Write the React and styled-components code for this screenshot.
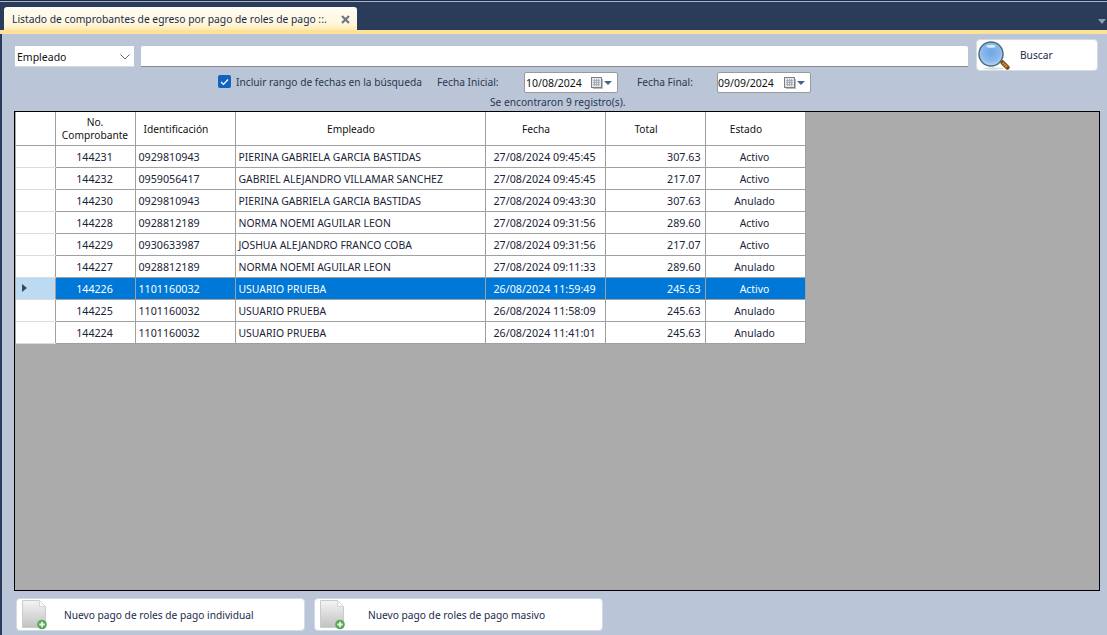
import React from "react";
import styled, { createGlobalStyle } from "styled-components";

const rows = [
  ["144231", "0929810943", "PIERINA GABRIELA GARCIA BASTIDAS", "27/08/2024 09:45:45", "307.63", "Activo"],
  ["144232", "0959056417", "GABRIEL ALEJANDRO VILLAMAR SANCHEZ", "27/08/2024 09:45:45", "217.07", "Activo"],
  ["144230", "0929810943", "PIERINA GABRIELA GARCIA BASTIDAS", "27/08/2024 09:43:30", "307.63", "Anulado"],
  ["144228", "0928812189", "NORMA NOEMI AGUILAR LEON", "27/08/2024 09:31:56", "289.60", "Activo"],
  ["144229", "0930633987", "JOSHUA ALEJANDRO FRANCO COBA", "27/08/2024 09:31:56", "217.07", "Activo"],
  ["144227", "0928812189", "NORMA NOEMI AGUILAR LEON", "27/08/2024 09:11:33", "289.60", "Anulado"],
  ["144226", "1101160032", "USUARIO PRUEBA", "26/08/2024 11:59:49", "245.63", "Activo"],
  ["144225", "1101160032", "USUARIO PRUEBA", "26/08/2024 11:58:09", "245.63", "Anulado"],
  ["144224", "1101160032", "USUARIO PRUEBA", "26/08/2024 11:41:01", "245.63", "Anulado"],
];

function SearchIcon() {
  return (
    <svg width="34" height="31" viewBox="0 0 34 31">
      <defs>
        <radialGradient id="lens" cx="50%" cy="42%" r="60%">
          <stop offset="0%" stopColor="#6ea6e8" />
          <stop offset="65%" stopColor="#8ab9ec" />
          <stop offset="100%" stopColor="#c4e0f6" />
        </radialGradient>
      </defs>
      <ellipse cx="15" cy="28.500" rx="10" ry="1.200" fill="#dcdcdc" />
      <path d="M24.500 22.500l5 5" stroke="#7c4a14" strokeWidth="4.500" strokeLinecap="round" />
      <path d="M24.800 22.800l4.500 4.500" stroke="#e5a23c" strokeWidth="2.400" strokeDasharray="1.300 .9" />
      <circle cx="13" cy="14" r="12" fill="url(#lens)" stroke="#4d6d80" strokeWidth="1.500" />
      <ellipse cx="13" cy="6.200" rx="4.500" ry="1.500" fill="#d9ecfb" />
    </svg>
  );
}

function NewDocIcon() {
  return (
    <svg width="26" height="30" viewBox="0 0 26 30">
      <defs>
        <linearGradient id="sheet" x1="0" y1="0" x2="0" y2="1">
          <stop offset="0%" stopColor="#f4f4f4" />
          <stop offset="100%" stopColor="#c2c2c2" />
        </linearGradient>
      </defs>
      <path d="M.5.500h17l6 6v21H.5z" fill="url(#sheet)" stroke="#cbcbcb" />
      <path d="M17.500.500v6h6z" fill="#fbfbfb" stroke="#d6d6d6" />
      <circle cx="20" cy="24.500" r="4.800" fill="#58a85a" />
      <path d="M20 21.800v5.400M17.300 24.500h5.400" stroke="#e8f5e8" strokeWidth="1.800" />
    </svg>
  );
}

function CalendarIcon() {
  return (
    <svg width="12" height="12" viewBox="0 0 12 12">
      <rect x="0.500" y="0.500" width="10" height="10" fill="#e4e6ea" stroke="#7d7f86" />
      <path d="M2 3.500h7M2 5.500h7M2 7.500h7M3.500 2v7M5.500 2v7M7.500 2v7" stroke="#a2a5ae" strokeWidth="0.800" />
      <path d="M11.500 2v9.500H2" fill="none" stroke="#b9b9b9" />
    </svg>
  );
}

export default function App() {
  return (
    <>
      <GlobalStyle />
      <Window>
        <TabStrip>
          <Tab>
            <TabTitle>Listado de comprobantes de egreso por pago de roles de pago ::.</TabTitle>
            <TabClose>
              <svg width="9" height="9" viewBox="0 0 9 9">
                <path d="M1 1l7 7M8 1L1 8" stroke="#70767f" strokeWidth="2.200" />
              </svg>
            </TabClose>
          </Tab>
          <StripArrow />
        </TabStrip>
        <Accent />
        <Content>
          <SearchRow>
            <Select>
              <span>Empleado</span>
              <svg width="10" height="6" viewBox="0 0 10 6">
                <path d="M.5.500L5 5 9.500.500" fill="none" stroke="#666" />
              </svg>
            </Select>
            <SearchInput />
            <ActionButton $width={122} $height={32} $pad={1}>
              <SearchIcon />
              <ButtonLabel $gap={8}>Buscar</ButtonLabel>
            </ActionButton>
          </SearchRow>
          <FilterRow>
            <CheckBox>
              <svg width="9" height="8" viewBox="0 0 9 8">
                <path d="M1 4l2.500 2.500L8 1.500" fill="none" stroke="#fff" strokeWidth="1.200" />
              </svg>
            </CheckBox>
            <FilterLabel $width={201}>Incluir rango de fechas en la búsqueda</FilterLabel>
            <FilterLabel $width={87}>Fecha Inicial:</FilterLabel>
            <DateField $pad={1}>
              <DateText $width={65}>10/08/2024</DateText>
              <CalendarIcon />
              <DropArrow />
            </DateField>
            <FilterLabel $width={80} $pad={19}>Fecha Final:</FilterLabel>
            <DateField $pad={0}>
              <DateText $width={66}>09/09/2024</DateText>
              <CalendarIcon />
              <DropArrow />
            </DateField>
          </FilterRow>
          <ResultCount>Se encontraron 9 registro(s).</ResultCount>
          <GridPanel>
            <Table>
              <colgroup>
                <col width="39" />
                <col width="80" />
                <col width="100" />
                <col width="250" />
                <col width="120" />
                <col width="100" />
                <col width="100" />
              </colgroup>
              <thead>
                <tr>
                  <HeadCell />
                  <HeadCell>No.<br />Comprobante</HeadCell>
                  <HeadCell $sortable>Identificación</HeadCell>
                  <HeadCell $sortable>Empleado</HeadCell>
                  <HeadCell $sortable>Fecha</HeadCell>
                  <HeadCell $sortable>Total</HeadCell>
                  <HeadCell $sortable>Estado</HeadCell>
                </tr>
              </thead>
              <tbody>
                {rows.map((r) => {
                  const selected = r[0] === "144226";
                  return (
                    <Row key={r[0]} $selected={selected}>
                      <RowHeader $selected={selected}>{selected && <RowMarker />}</RowHeader>
                      <Cell $align="center" $numeric>{r[0]}</Cell>
                      <Cell $numeric>{r[1]}</Cell>
                      <Cell>{r[2]}</Cell>
                      <Cell $align="center" $numeric>{r[3]}</Cell>
                      <Cell $align="right" $numeric>{r[4]}</Cell>
                      <Cell $align="center">{r[5]}</Cell>
                    </Row>
                  );
                })}
              </tbody>
            </Table>
          </GridPanel>
          <Footer>
            <ActionButton $width={289} $height={33} $pad={5}>
              <NewDocIcon />
              <ButtonLabel $gap={16}>Nuevo pago de roles de pago individual</ButtonLabel>
            </ActionButton>
            <ActionButton $width={289} $height={33} $pad={5}>
              <NewDocIcon />
              <ButtonLabel $gap={22}>Nuevo pago de roles de pago masivo</ButtonLabel>
            </ActionButton>
          </Footer>
        </Content>
      </Window>
    </>
  );
}

const GlobalStyle = createGlobalStyle`
  html, body {
    margin: 0;
    padding: 0;
    overflow: hidden;
  }
  body {
    font-family: "Noto Sans", "Liberation Sans", sans-serif;
    font-size: 10.2px;
    color: #1a2438;
  }
`;

const Window = styled.div`
  width: 1107px;
  height: 635px;
  display: flex;
  flex-direction: column;
  background: #bac6d7;
  border-left: 2px solid #2b3b5a;
  box-sizing: border-box;
`;

const TabStrip = styled.div`
  height: 30px;
  box-sizing: border-box;
  margin-left: -2px;
  padding: 6px 0 0 4px;
  display: flex;
  justify-content: space-between;
  background: #2b3b5a;
  border-top: 1px solid #1d2a44;
  box-shadow: inset 0 1px 0 #a9b6d0;
`;

const Tab = styled.div`
  width: 353px;
  height: 24px;
  box-sizing: border-box;
  padding: 0 7px 0 8px;
  display: flex;
  align-items: center;
  justify-content: space-between;
  background: linear-gradient(#fffdf6, #fff7dc 70%, #ffe9a8);
  border-radius: 3px 3px 0 0;
`;

const TabTitle = styled.span`
  font-size: 10.3px;
  white-space: nowrap;
  color: #1b2b4b;
`;

const TabClose = styled.span`
  display: flex;
`;

const StripArrow = styled.div`
  align-self: center;
  margin: 5px 1px 0 0;
  width: 0;
  height: 0;
  border-left: 4px solid transparent;
  border-right: 4px solid transparent;
  border-top: 5px solid #8b9ab5;
`;

const Accent = styled.div`
  height: 4px;
  margin-left: -2px;
  background: #ffe097;
`;

const Content = styled.div`
  flex: 1;
  display: flex;
  flex-direction: column;
  padding: 5px 7px 4px 12px;
  min-height: 0;
`;

const SearchRow = styled.div`
  display: flex;
  align-items: flex-start;
  height: 32px;
`;

const Select = styled.div`
  width: 119px;
  height: 20px;
  margin: 7px 0 0 1px;
  box-sizing: border-box;
  padding: 1px 4px 0 2px;
  display: flex;
  align-items: center;
  justify-content: space-between;
  background: #fff;
  color: #111;
  font-size: 10.5px;
  box-shadow: 0 1px 0 #d6dbe3;
`;

const SearchInput = styled.div`
  width: 827px;
  height: 21px;
  margin: 7px 8px 0 7px;
  box-sizing: border-box;
  background: #fff;
  border-bottom: 1px solid #8b8b8b;
  border-radius: 2px 2px 0 0;
`;

const ActionButton = styled.div`
  width: ${(p) => p.$width}px;
  height: ${(p) => p.$height}px;
  box-sizing: border-box;
  padding-left: ${(p) => p.$pad}px;
  display: flex;
  align-items: center;
  background: #fff;
  border: 1px solid #d3dae4;
  border-radius: 4px;
  flex-shrink: 0;
`;

const ButtonLabel = styled.span`
  margin-left: ${(p) => p.$gap}px;
  color: #1b2b4b;
  white-space: nowrap;
`;

const FilterRow = styled.div`
  height: 21px;
  margin-top: 1px;
  padding-left: 204px;
  display: flex;
  align-items: center;
`;

const CheckBox = styled.div`
  width: 13px;
  height: 13px;
  margin: -2px 5px 0 0;
  display: flex;
  align-items: center;
  justify-content: center;
  background: #0f62bd;
  border-radius: 2px;
`;

const FilterLabel = styled.span`
  width: ${(p) => p.$width}px;
  padding-left: ${(p) => p.$pad || 0}px;
  margin-top: -2px;
  flex-shrink: 0;
  white-space: nowrap;
  color: #2a3650;
`;

const DateField = styled.div`
  width: 94px;
  height: 21px;
  box-sizing: border-box;
  padding-left: ${(p) => p.$pad}px;
  display: flex;
  align-items: center;
  background: #fff;
  border: 1px solid #9a9a9a;
  border-radius: 2px;
  color: #111;
  font-size: 10.5px;
  flex-shrink: 0;
`;

const DateText = styled.span`
  width: ${(p) => p.$width}px;
`;

const DropArrow = styled.div`
  margin-left: 1px;
  width: 0;
  height: 0;
  border-left: 4px solid transparent;
  border-right: 4px solid transparent;
  border-top: 4px solid #46628c;
`;

const ResultCount = styled.div`
  height: 18px;
  line-height: 18px;
  padding-left: 476px;
  color: #2a3650;
`;

const GridPanel = styled.div`
  width: 1086px;
  height: 481px;
  box-sizing: border-box;
  background: #ababab;
  border: 1px solid #000;
  padding-left: 1px;
  overflow: hidden;
`;

const Table = styled.table`
  width: 789px;
  table-layout: fixed;
  border-collapse: collapse;
`;

const HeadCell = styled.th`
  height: 33px;
  padding: ${(p) => (p.$sortable ? "3px 18px 0 0" : "2px 0 0")};
  box-sizing: border-box;
  background: #fff;
  border-right: 1px solid #a0a0a0;
  border-bottom: 1px solid #a0a0a0;
  font-weight: 400;
  line-height: 13px;
  text-align: center;
  color: #111;
`;

const Row = styled.tr`
  height: 22px;
  background: ${(p) => (p.$selected ? "#0078d7" : "#fff")};
  color: ${(p) => (p.$selected ? "#fff" : "#1a2438")};
`;

const Cell = styled.td`
  padding: 1px 4px 0 3px;
  box-sizing: border-box;
  border-right: 1px solid #a0a0a0;
  border-bottom: 1px solid #a0a0a0;
  font-size: ${(p) => (p.$numeric ? "10.7px" : "10.4px")};
  text-align: ${(p) => p.$align || "left"};
  white-space: nowrap;
  overflow: hidden;
`;

const RowHeader = styled.td`
  padding: 0 0 0 6px;
  box-sizing: border-box;
  background: ${(p) => (p.$selected ? "#bcdbf2" : "#fff")};
  border-right: 1px solid #a0a0a0;
  border-bottom: 1px solid #dcdcdc;
`;

const RowMarker = styled.div`
  width: 0;
  height: 0;
  border-top: 4px solid transparent;
  border-bottom: 4px solid transparent;
  border-left: 5px solid #3c4656;
`;

const Footer = styled.div`
  margin-top: 7px;
  padding-left: 2px;
  display: flex;
  gap: 9px;
`;
